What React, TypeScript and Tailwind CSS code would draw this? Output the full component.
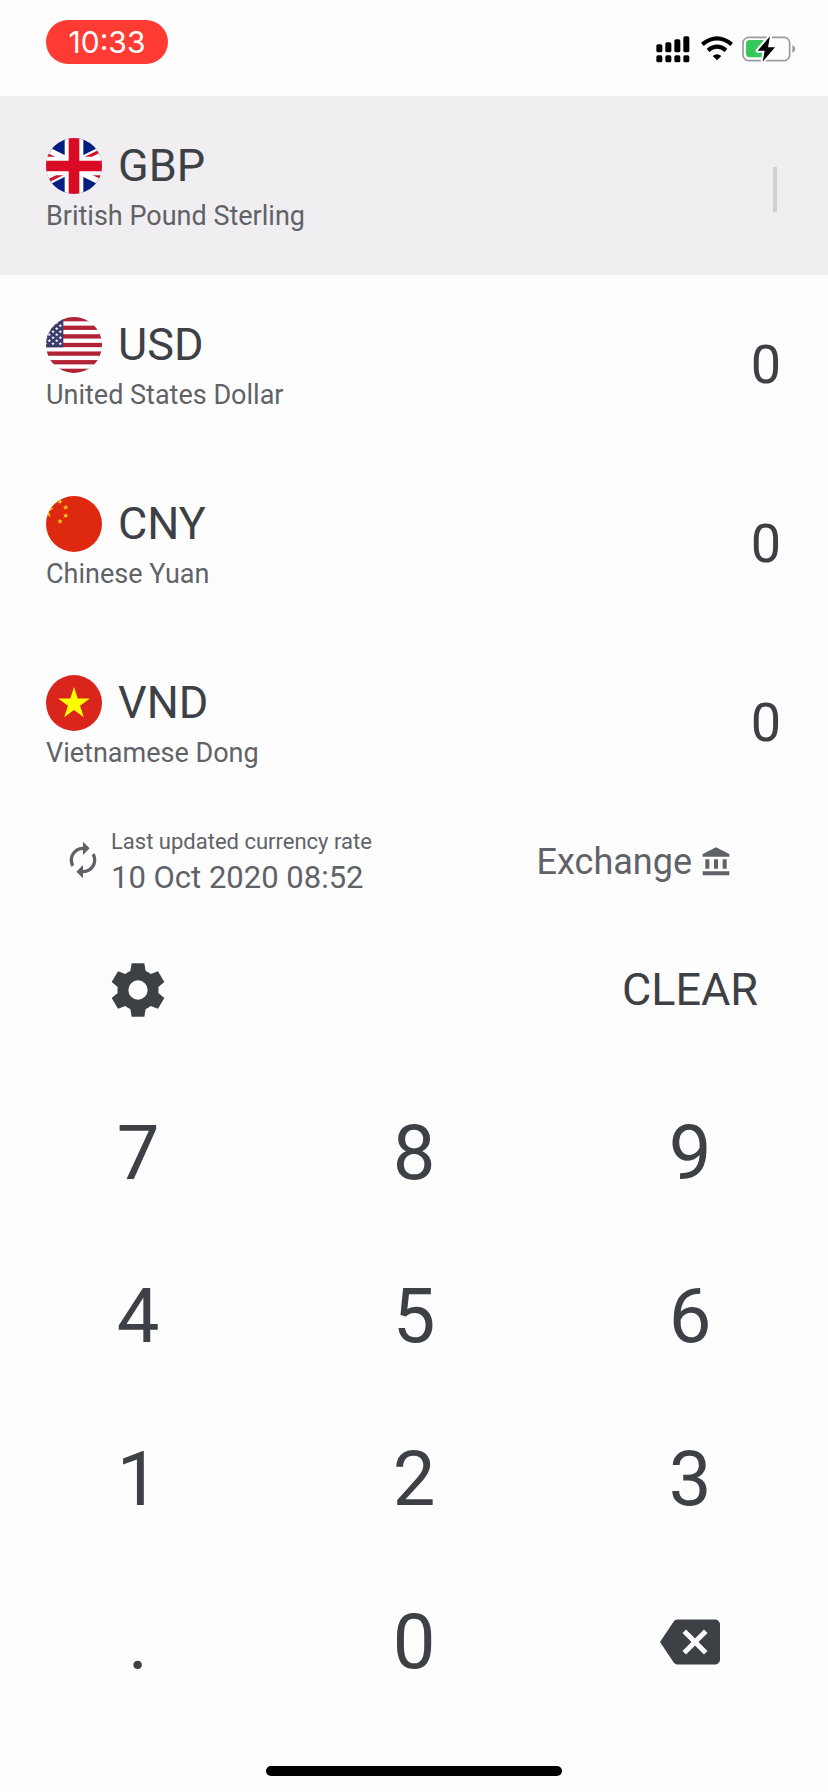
import type { ReactNode } from "react";
import { MdAccountBalance, MdAutorenew, MdBackspace } from "react-icons/md";

const STAR =
  "M0 -10 L2.25 -3.09 L9.51 -3.09 L3.63 1.18 L5.88 8.09 L0 3.82 L-5.88 8.09 L-3.63 1.18 L-9.51 -3.09 L-2.25 -3.09 Z";

function Flag({ id, children }: { id: string; children: ReactNode }) {
  return (
    <svg viewBox="0 0 168 168" className="size-14 shrink-0" aria-hidden="true">
      <defs>
        <clipPath id={id}>
          <circle cx="84" cy="84" r="84" />
        </clipPath>
      </defs>
      <g clipPath={`url(#${id})`}>{children}</g>
    </svg>
  );
}

function FlagGB() {
  return (
    <Flag id="flag-gb">
      <rect width="168" height="168" fill="#001f80" />
      <path d="M-84 0 L252 168 M252 0 L-84 168" stroke="#fff" strokeWidth="34" />
      <path d="M-84 6 L84 90 M84 78 L252 162" stroke="#cf142b" strokeWidth="10" />
      <path d="M252 -6 L84 78 M84 90 L-84 174" stroke="#cf142b" strokeWidth="10" />
      <path d="M84 0 V168 M0 84 H168" stroke="#fff" strokeWidth="56" />
      <path d="M84 0 V168 M0 84 H168" stroke="#d80a24" strokeWidth="32" />
    </Flag>
  );
}

function FlagUS() {
  const stripes = [0, 2, 4, 6, 8, 10, 12];
  const rows = [8, 17, 26, 35, 44, 53, 62, 71, 80];
  return (
    <Flag id="flag-us">
      <rect width="168" height="168" fill="#fff" />
      {stripes.map((i) => (
        <rect key={i} y={(i * 168) / 13} width="168" height={168 / 13} fill="#b22234" />
      ))}
      <rect width="52" height="91" fill="#3c3b6e" />
      {rows.map((y, r) =>
        (r % 2 === 0 ? [-1, 21, 43] : [10, 32]).map((x) => (
          <path key={`${x}-${y}`} d={STAR} transform={`translate(${x} ${y}) scale(0.56)`} fill="#fff" />
        )),
      )}
      <circle cx="84" cy="84" r="83" fill="none" stroke="#000" strokeOpacity="0.12" strokeWidth="2" />
    </Flag>
  );
}

function FlagCN() {
  return (
    <Flag id="flag-cn">
      <rect width="168" height="168" fill="#de2910" />
      <g fill="#fcd116">
        <path d={STAR} transform="translate(0 44) scale(2.4)" />
        <path d={STAR} transform="translate(42 17) rotate(20) scale(0.9)" />
        <path d={STAR} transform="translate(59 34) rotate(-10) scale(0.9)" />
        <path d={STAR} transform="translate(59 59) rotate(10) scale(0.9)" />
        <path d={STAR} transform="translate(42 76) rotate(-10) scale(0.9)" />
      </g>
    </Flag>
  );
}

function FlagVN() {
  return (
    <Flag id="flag-vn">
      <rect width="168" height="168" fill="#da251d" />
      <path d={STAR} transform="translate(84 86) scale(5)" fill="#ff0" />
    </Flag>
  );
}

function StatusIcons() {
  return (
    <svg viewBox="0 0 420 84" className="h-7 w-[140px]" aria-hidden="true">
      <g fill="#000">
        <rect x="1" y="25" width="18" height="24" rx="5" />
        <rect x="28" y="19" width="18" height="30" rx="5" />
        <rect x="55" y="10" width="18" height="39" rx="5" />
        <rect x="82" y="1" width="18" height="48" rx="5" />
        <rect x="1" y="58" width="18" height="21" rx="5" />
        <rect x="28" y="58" width="18" height="21" rx="5" />
        <rect x="55" y="58" width="18" height="21" rx="5" />
        <rect x="82" y="58" width="18" height="21" rx="5" />
      </g>
      <path d="M139 25 Q183 -11 227 25" fill="none" stroke="#000" strokeWidth="12" />
      <path d="M156 43 Q183 21 210 43" fill="none" stroke="#000" strokeWidth="12" />
      <path d="M170 60 Q183 49 196 60 L183 73 Z" fill="#000" />
      <rect x="261" y="4" width="140" height="70" rx="17" fill="none" stroke="#9b9b9e" strokeWidth="5" />
      <path d="M409 27 Q418 31 418 39 Q418 47 409 51 Z" fill="#9b9b9e" />
      <path d="M282 12 H322 V64 H282 Q270 64 270 52 V24 Q270 12 282 12 Z" fill="#35c759" />
      <path
        d="M342 1 L305 44 H326 L320 77 L357 34 H336 Z"
        fill="#000"
        stroke="#fefdfe"
        strokeWidth="12"
        strokeLinejoin="round"
        paintOrder="stroke"
      />
    </svg>
  );
}

function GearIcon() {
  return (
    <svg viewBox="-81 -81 162 162" className="size-[54px]" aria-hidden="true">
      <path
        fill="currentColor"
        fillRule="evenodd"
        d="M-23 -57 L-19 -80 H19 L23 -57 Q31 -54 38 -48 L60 -56 L79 -24 L61 -9 Q62 0 61 9 L79 24 L60 56 L38 48 Q31 54 23 57 L19 80 H-19 L-23 57 Q-31 54 -38 48 L-60 56 L-79 24 L-61 9 Q-62 0 -61 -9 L-79 -24 L-60 -56 L-38 -48 Q-31 -54 -23 -57 Z M-29 0 A29 29 0 1 0 29 0 A29 29 0 1 0 -29 0 Z"
      />
    </svg>
  );
}

const CURRENCIES = [
  { code: "GBP", name: "British Pound Sterling", flag: <FlagGB />, value: "", active: true },
  { code: "USD", name: "United States Dollar", flag: <FlagUS />, value: "0", active: false },
  { code: "CNY", name: "Chinese Yuan", flag: <FlagCN />, value: "0", active: false },
  { code: "VND", name: "Vietnamese Dong", flag: <FlagVN />, value: "0", active: false },
];

const KEYS = ["7", "8", "9", "4", "5", "6", "1", "2", "3", ".", "0"];

export default function App() {
  return (
    <div className="flex min-h-screen flex-col bg-[#fefdfe] font-['Roboto',sans-serif] text-[#3d4045]">
      <header className="flex h-24 items-start justify-between pt-5 pr-8 pl-[46px]">
        <time className="flex h-11 w-[122px] items-center justify-center rounded-full bg-[#ff3b34] font-['Inter',sans-serif] text-[30px] text-white">
          10:33
        </time>
        <div className="pt-4">
          <StatusIcons />
        </div>
      </header>

      <main className="flex flex-col">
        <ul>
          {CURRENCIES.map((c) => (
            <li key={c.code}>
              <button
                type="button"
                className={`flex h-[179px] w-full items-center justify-between pr-[47px] pl-[46px] text-left ${
                  c.active ? "bg-[#f0eef0]" : ""
                }`}
              >
                <span className="flex flex-col gap-1">
                  <span className="flex items-center gap-4">
                    {c.flag}
                    <span className="text-[45px] leading-14">{c.code}</span>
                  </span>
                  <span className="text-[27px] leading-9 text-[#5f6368]">{c.name}</span>
                </span>
                {c.active ? (
                  <span className="pt-2 pr-1">
                    <span className="block h-[45px] w-1 bg-[#cfd0d2]" />
                  </span>
                ) : (
                  <span className="text-[54px] leading-14">{c.value}</span>
                )}
              </button>
            </li>
          ))}
        </ul>

        <section className="flex h-24 items-center justify-between pr-24 pl-[63px] text-[#5f6368]">
          <button type="button" className="flex items-center gap-2 text-left">
            <MdAutorenew className="size-10" aria-hidden="true" />
            <span className="flex flex-col">
              <span className="text-[22px] leading-9">Last updated currency rate</span>
              <span className="text-[31px] leading-9">10 Oct 2020 08:52</span>
            </span>
          </button>
          <button type="button" className="flex items-center gap-2 pt-1 text-[36px] leading-12">
            Exchange
            <MdAccountBalance className="size-8" aria-hidden="true" />
          </button>
        </section>

        <section className="grid auto-rows-[163px] grid-cols-3">
          <button type="button" aria-label="Settings" className="flex items-center justify-center">
            <GearIcon />
          </button>
          <button type="button" className="col-start-3 text-[45px]">
            CLEAR
          </button>
          {KEYS.map((k) => (
            <button key={k} type="button" className="text-[76px] leading-none">
              {k}
            </button>
          ))}
          <button type="button" aria-label="Backspace" className="flex items-center justify-center">
            <MdBackspace className="size-15" aria-hidden="true" />
          </button>
        </section>
      </main>

      <footer className="mt-auto flex justify-center pb-4">
        <div className="h-2.5 w-[296px] rounded-full bg-black" />
      </footer>
    </div>
  );
}
